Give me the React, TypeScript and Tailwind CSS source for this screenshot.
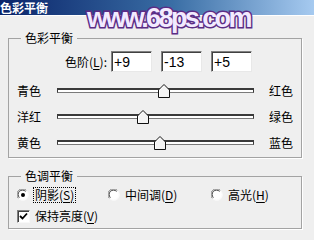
import React from "react";

const cjk = "font-['Noto_Sans_CJK_SC','Noto_Sans',sans-serif]";

function Ul({ children }: { children: React.ReactNode }) {
  return <span className="underline underline-offset-[2px]">{children}</span>;
}

function NumberBox({ value }: { value: string }) {
  return (
    <div className="flex h-[21px] w-[41px] items-center border border-t-[#808080] border-l-[#808080] border-r-[#e8e8e8] border-b-[#e8e8e8] bg-white pl-[2px] shadow-[inset_1px_1px_0_#404040] font-['Liberation_Sans',sans-serif] text-[14px] leading-none text-black">
      {value}
    </div>
  );
}

function Thumb() {
  return (
    <svg width="12" height="14" viewBox="0 0 12 14" className="block">
      <polygon points="0.5,6 6,0.5 11.5,6 11.5,13.5 0.5,13.5" fill="#f4f4f4" stroke="#111" strokeWidth="1" />
      <polyline points="1.5,12.5 1.5,6.4 6,1.9" fill="none" stroke="#fff" strokeWidth="1" />
    </svg>
  );
}

function SliderRow({ left, right, value }: { left: string; right: string; value: number }) {
  // -100..100 mapped onto the track, thumb is 12px wide
  const offset = Math.round(92.5 + value * 0.955);
  return (
    <div className="flex h-[26px] items-center pl-[8px]">
      <span className="w-[40px] text-[12px] leading-none">{left}</span>
      <div className="relative h-[14px] w-[197px]">
        <div className="absolute left-0 right-0 top-[4px] h-[5px] border border-t-2 border-[#3a3a3a] border-b-[#7a7a7a] bg-white" />
        <div className="absolute top-0" style={{ left: offset }}>
          <Thumb />
        </div>
      </div>
      <span className="ml-[15px] text-[12px] leading-none">{right}</span>
    </div>
  );
}

function Radio({ checked }: { checked?: boolean }) {
  return (
    <svg width="12" height="12" viewBox="0 0 12 12" className="block shrink-0">
      <circle cx="6" cy="6" r="5.5" fill="#fff" />
      <path d="M1.5 9.5 A5.5 5.5 0 0 1 9.5 1.5" fill="none" stroke="#808080" strokeWidth="1" />
      <path d="M2.4 8.6 A4.3 4.3 0 0 1 8.6 2.4" fill="none" stroke="#404040" strokeWidth="1" />
      <path d="M9.5 1.5 A5.5 5.5 0 0 1 1.5 9.5" fill="none" stroke="#f8f8f8" strokeWidth="1" />
      {checked ? <circle cx="6" cy="6" r="2" fill="#000" /> : null}
    </svg>
  );
}

export default function App() {
  return (
    <div className={`relative h-[240px] w-[314px] overflow-hidden bg-[#efefef] text-black ${cjk}`}>
      <div className="h-[15px] bg-[linear-gradient(90deg,#0a246a_0%,#3a6ea5_55%,#a6caf0_100%)] pl-0 text-[12px] font-bold leading-[15px] text-white">
        色彩平衡
      </div>
      <div className="h-[1px] bg-white" />

      <span className="absolute left-[87px] top-[5px] font-['Liberation_Sans',sans-serif] text-[27px] font-bold leading-none tracking-[-2.6px] text-[#f2eaff] [-webkit-text-stroke:3px_#5b2c86] [paint-order:stroke_fill]">
        www.68ps.com
      </span>

      <fieldset className="ml-[8px] mt-[15px] h-[127px] w-[294px] border border-[#a3a3a3] shadow-[1px_1px_0_#ffffff]">
        <legend className="ml-[12px] px-[4px] text-[12px] leading-[14px]">色彩平衡</legend>
        <div className="mt-[6px] flex items-center">
          <div className="w-[102px] pr-[4px] text-right text-[12px] leading-none">
            色阶(<Ul>L</Ul>):
          </div>
          <div className="flex gap-[9px]">
            <NumberBox value="+9" />
            <NumberBox value="-13" />
            <NumberBox value="+5" />
          </div>
        </div>
        <div className="mt-[6px]">
          <SliderRow left="青色" right="红色" value={9} />
          <SliderRow left="洋红" right="绿色" value={-13} />
          <SliderRow left="黄色" right="蓝色" value={5} />
        </div>
      </fieldset>

      <fieldset className="ml-[8px] mt-[11px] h-[60px] w-[294px] border border-[#a3a3a3] shadow-[1px_1px_0_#ffffff]">
        <legend className="ml-[12px] px-[4px] text-[12px] leading-[14px]">色调平衡</legend>
        <div className="mt-[4px] flex h-[16px] items-center pl-[8px] text-[12px] leading-none">
          <div className="flex w-[91px] items-center">
            <Radio checked />
            <span className="ml-[4px] border border-dotted border-black px-[1px] py-[1px]">
              阴影(<Ul>S</Ul>)
            </span>
          </div>
          <div className="flex w-[103px] items-center">
            <Radio />
            <span className="ml-[5px]">
              中间调(<Ul>D</Ul>)
            </span>
          </div>
          <div className="flex items-center">
            <Radio />
            <span className="ml-[5px]">
              高光(<Ul>H</Ul>)
            </span>
          </div>
        </div>
        <div className="mt-[5px] flex h-[16px] items-center pl-[8px] text-[12px] leading-none">
          <div className="flex h-[13px] w-[13px] items-center justify-center border border-t-[#808080] border-l-[#808080] border-r-[#f8f8f8] border-b-[#f8f8f8] bg-white shadow-[inset_1px_1px_0_#404040]">
            <svg width="9" height="9" viewBox="0 0 9 9" className="block">
              <path d="M1 4 L3.5 6.5 L8 1.5" fill="none" stroke="#000" strokeWidth="1.8" />
            </svg>
          </div>
          <span className="ml-[5px]">
            保持亮度(<Ul>V</Ul>)
          </span>
        </div>
      </fieldset>
    </div>
  );
}
